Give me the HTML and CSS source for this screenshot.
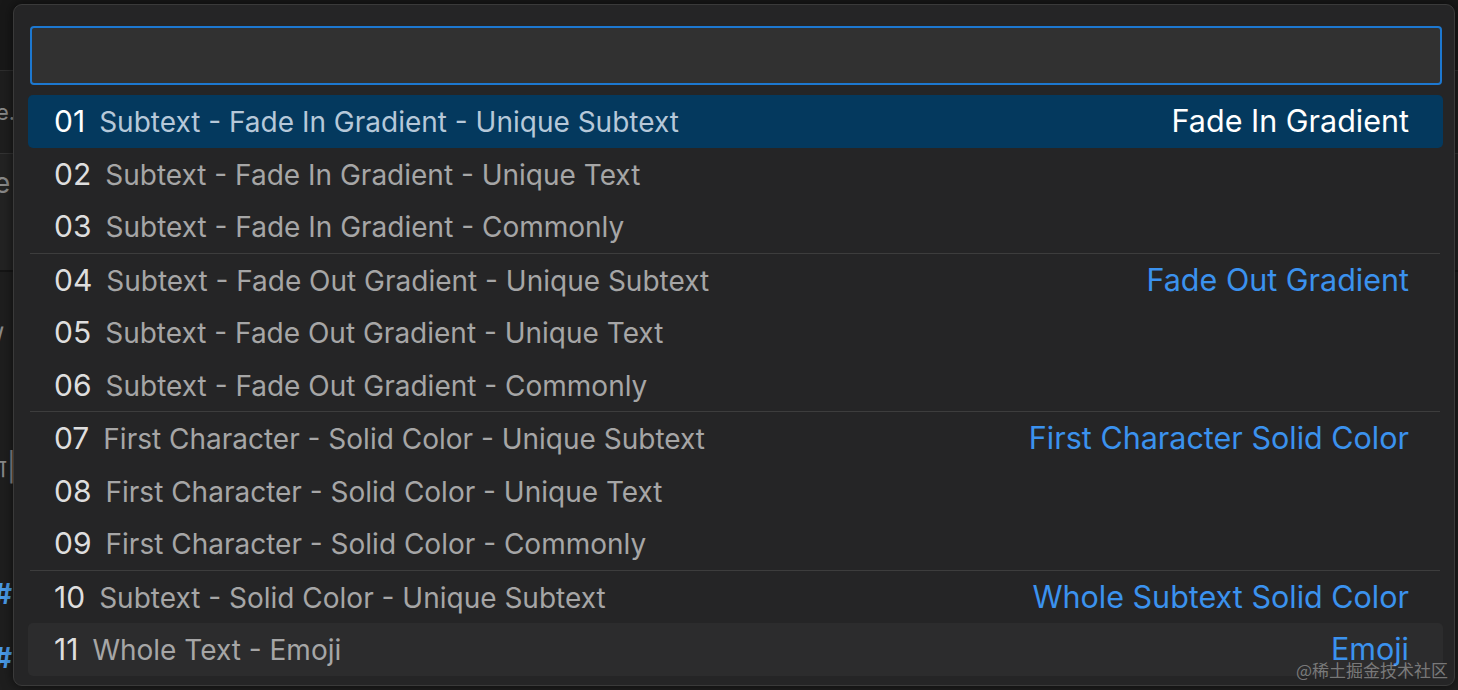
FILE: index.html
```html
<!DOCTYPE html>
<html lang="en">
<head>
  <meta charset="UTF-8">
  <title>Quick Pick - Highlight Styles</title>
  <link rel="stylesheet" href="styles.css">
</head>
<body>
  <div class="editor">
    <div class="tabs"></div>
    <div class="crumbs"><span class="frag">e.</span></div>
    <div class="toolbar"><span class="frag">e</span></div>
    <div class="code">
      <div class="line"><span class="frag">/</span></div>
      <div class="line"></div>
      <div class="line"><span class="frag">ℸ|</span></div>
      <div class="line"></div>
      <div class="line"><span class="frag hash">#</span></div>
      <div class="line"><span class="frag hash">#</span></div>
    </div>
  </div>

  <div class="quick-pick">
    <div class="input"></div>
    <div class="list">
      <div class="row selected">
        <span class="num">01</span><span class="desc">Subtext - Fade In Gradient - Unique Subtext</span>
        <span class="detail">Fade In Gradient</span>
      </div>
      <div class="row">
        <span class="num">02</span><span class="desc">Subtext - Fade In Gradient - Unique Text</span>
      </div>
      <div class="row">
        <span class="num">03</span><span class="desc">Subtext - Fade In Gradient - Commonly</span>
      </div>
      <div class="sep"></div>
      <div class="row">
        <span class="num">04</span><span class="desc">Subtext - Fade Out Gradient - Unique Subtext</span>
        <span class="detail">Fade Out Gradient</span>
      </div>
      <div class="row">
        <span class="num">05</span><span class="desc">Subtext - Fade Out Gradient - Unique Text</span>
      </div>
      <div class="row">
        <span class="num">06</span><span class="desc">Subtext - Fade Out Gradient - Commonly</span>
      </div>
      <div class="sep"></div>
      <div class="row">
        <span class="num">07</span><span class="desc">First Character - Solid Color - Unique Subtext</span>
        <span class="detail">First Character Solid Color</span>
      </div>
      <div class="row">
        <span class="num">08</span><span class="desc">First Character - Solid Color - Unique Text</span>
      </div>
      <div class="row">
        <span class="num">09</span><span class="desc">First Character - Solid Color - Commonly</span>
      </div>
      <div class="sep"></div>
      <div class="row">
        <span class="num">10</span><span class="desc">Subtext - Solid Color - Unique Subtext</span>
        <span class="detail">Whole Subtext Solid Color</span>
      </div>
      <div class="row hover">
        <span class="num">11</span><span class="desc">Whole Text - Emoji</span>
        <span class="detail">Emoji</span>
      </div>
    </div>
  </div>

  <div class="watermark">@稀土掘金技术社区</div>
</body>
</html>
```

FILE: styles.css
```css
body {
  margin: 0;
  height: 690px;
  overflow: hidden;
  background-color: #1c1c1c;
  font-family: 'Inter', 'Noto Sans', sans-serif;
}

.editor {
  display: flex;
  flex-direction: column;
  height: 100%;
}

.tabs {
  height: 72px;
  background-color: #181818;
  border-bottom: 1px solid #2e2e2e;
}

.crumbs {
  height: 84px;
  background-color: #1e1e1e;
  border-bottom: 1px solid #333;
  display: flex;
  align-items: center;
}

.toolbar {
  height: 120px;
  background-color: #232323;
  border-bottom: 2px solid #151515;
  padding-top: 12px;
  box-sizing: border-box;
}

.code {
  flex: 1;
  background-color: #1e1e1e;
  padding-top: 34px;
}

.line {
  height: 64px;
  display: flex;
  align-items: center;
}

.frag {
  font-size: 28px;
  color: #8a8a8a;
  margin-left: -6px;
}

.crumbs .frag {
  font-size: 22px;
  margin-left: -4px;
}

.hash {
  color: #4a9be8;
  font-weight: bold;
}

.quick-pick {
  position: absolute;
  left: 13px;
  top: 4px;
  width: 1442px;
  height: 682px;
  box-sizing: border-box;
  background-color: #252526;
  border: 1px solid #3a3a3a;
  border-radius: 9px;
  box-shadow: 0 0 12px rgba(0, 0, 0, 0.6);
  padding: 21px 11px 0 14px;
}

.input {
  margin: 0 1px 0 2px;
  height: 59px;
  box-sizing: border-box;
  background-color: #313131;
  border: 2px solid #1d78d0;
  border-radius: 4px;
}

.list {
  margin-top: 10px;
}

.row {
  display: flex;
  align-items: baseline;
  height: 52.5px;
  line-height: 52px;
  padding: 0 34px 0 26px;
  border-radius: 5px;
  white-space: nowrap;
}

.num {
  font-size: 30px;
  color: #dedede;
}

.desc {
  font-size: 28px;
  color: #a6a6a6;
  margin-left: 14px;
}

.detail {
  font-size: 30.5px;
  margin-left: auto;
  color: #3b92ee;
}

.row.selected {
  background-color: #04395e;
}

.row.selected .num,
.row.selected .detail {
  color: #ffffff;
}

.row.selected .desc {
  color: #b6c8d9;
}

.row.hover {
  background-color: #2c2c2d;
}

.sep {
  height: 1px;
  margin: 0 3px 0 2px;
  background-color: #3d3d3d;
}

.watermark {
  position: absolute;
  right: 10px;
  bottom: 8px;
  font-family: 'Noto Sans CJK SC', sans-serif;
  font-size: 17px;
  color: rgba(190, 190, 190, 0.55);
}
```
